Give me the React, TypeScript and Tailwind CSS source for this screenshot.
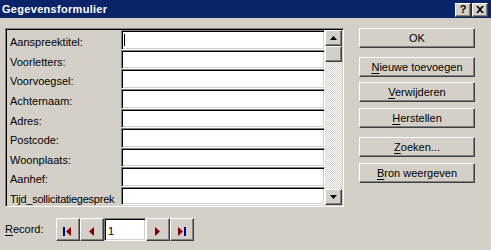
import React from "react";

const raised =
  "border border-t-white border-l-white border-r-[#404040] border-b-[#404040] shadow-[inset_-1px_-1px_#808080] bg-[#d4d0c8]";
const sunken =
  "border border-t-[#808080] border-l-[#808080] border-r-white border-b-white shadow-[inset_1px_1px_#000,inset_-1px_-1px_#d4d0c8]";

const rows: [string, number][] = [
  ["Aanspreektitel:", 20],
  ["Voorletters:", 19],
  ["Voorvoegsel:", 20],
  ["Achternaam:", 20],
  ["Adres:", 19],
  ["Postcode:", 20],
  ["Woonplaats:", 19],
  ["Aanhef:", 20],
  ["Tijd_sollicitatiegesprek", 18],
];

function Btn({ pre, u, rest, className = "" }: { pre?: string; u?: string; rest: string; className?: string }) {
  return (
    <div className={`${raised} w-[116px] h-[20px] flex items-center justify-center ${className}`}>
      <span>
        {pre}
        {u && <span className="underline underline-offset-2">{u}</span>}
        {rest}
      </span>
    </div>
  );
}

function NavIcon({ kind }: { kind: "first" | "prev" | "next" | "last" }) {
  return (
    <svg width="22" height="21" viewBox="0 0 22 21">
      {kind === "first" && (
        <>
          <rect x="6" y="8" width="2" height="9" fill="#000080" />
          <polygon points="9,12.5 14,8 14,17" fill="#800000" />
        </>
      )}
      {kind === "prev" && <polygon points="8,12.5 13,8 13,17" fill="#800000" />}
      {kind === "next" && <polygon points="13,12.5 8,8 8,17" fill="#800000" />}
      {kind === "last" && (
        <>
          <polygon points="12,12.5 7,8 7,17" fill="#800000" />
          <rect x="13" y="8" width="2" height="9" fill="#000080" />
        </>
      )}
    </svg>
  );
}

export default function App() {
  return (
    <div className="w-[491px] h-[250px] bg-[#d4d0c8] text-[11px] text-black font-['Liberation_Sans',Arial,sans-serif] overflow-hidden">
      {/* title bar */}
      <div className="h-[18px] bg-[#0a246a] flex items-center justify-between pl-[2px] pr-[3px]">
        <span className="text-white font-bold text-[11px] leading-none tracking-[0.3px]">Gegevensformulier</span>
        <div className="flex gap-[1px] mt-[1px]">
          <div className={`${raised} w-[16px] h-[14px] flex items-center justify-center font-bold text-[11px] leading-none`}>
            ?
          </div>
          <div className={`${raised} w-[16px] h-[14px] flex items-center justify-center`}>
            <svg width="8" height="7" viewBox="0 0 8 7">
              <path d="M0 0h2l2 2 2-2h2L5 3.5 8 7H6L4 5 2 7H0l3-3.5z" fill="#000" />
            </svg>
          </div>
        </div>
      </div>

      <div className="flex pl-[5px] pt-[10px]">
        <div className="flex flex-col">
          {/* record panel */}
          <div className={`${sunken} w-[339px] h-[179px] p-[1px] flex bg-[#d4d0c8]`}>
            <div className="flex flex-col flex-1">
              {rows.map(([label, h], i) => (
                <div key={label} className="flex" style={{ height: h }}>
                  <div
                    className={`w-[114px] pl-[3px] pt-[4px] whitespace-nowrap overflow-hidden ${
                      i === 8 ? "tracking-[-0.25px]" : ""
                    }`}
                  >
                    {label}
                  </div>
                  <div className={`${sunken} flex-1 bg-white relative`}>
                    {i === 0 && <div className="absolute left-[2px] top-[3px] w-[1px] h-[12px] bg-black" />}
                  </div>
                </div>
              ))}
            </div>
            {/* scrollbar */}
            <div className="w-[17px] flex flex-col bg-[repeating-conic-gradient(#d4d0c8_0_25%,#fff_0_50%)] bg-[length:2px_2px]">
              <div className={`${raised} h-[16px] flex items-center justify-center`}>
                <svg width="7" height="4" viewBox="0 0 7 4">
                  <polygon points="3.5,0 7,4 0,4" fill="#000" />
                </svg>
              </div>
              <div className={`${raised} h-[16px]`} />
              <div className="flex-1" />
              <div className={`${raised} h-[16px] flex items-center justify-center`}>
                <svg width="7" height="4" viewBox="0 0 7 4">
                  <polygon points="0,0 7,0 3.5,4" fill="#000" />
                </svg>
              </div>
            </div>
          </div>

          {/* record navigation */}
          <div className="flex items-center mt-[11px]">
            <span className="w-[51px]">
              <span className="underline underline-offset-2">R</span>ecord:
            </span>
            <div className="flex">
              <div className={`${raised} w-[24px] h-[23px] flex items-center justify-center`}>
                <NavIcon kind="first" />
              </div>
              <div className={`${raised} w-[24px] h-[23px] flex items-center justify-center`}>
                <NavIcon kind="prev" />
              </div>
              <div className={`${sunken} w-[42px] h-[23px] bg-white pl-[3px] pt-[4px]`}>1</div>
              <div className={`${raised} w-[24px] h-[23px] flex items-center justify-center`}>
                <NavIcon kind="next" />
              </div>
              <div className={`${raised} w-[24px] h-[23px] flex items-center justify-center`}>
                <NavIcon kind="last" />
              </div>
            </div>
          </div>
        </div>

        {/* buttons */}
        <div className="flex flex-col ml-[15px]">
          <Btn rest="OK" />
          <Btn u="N" rest="ieuwe toevoegen" className="mt-[9px]" />
          <Btn u="V" rest="erwijderen" className="mt-[5px]" />
          <Btn u="H" rest="erstellen" className="mt-[6px]" />
          <Btn u="Z" rest="oeken..." className="mt-[9px]" />
          <Btn u="B" rest="ron weergeven" className="mt-[6px]" />
        </div>
      </div>
    </div>
  );
}
